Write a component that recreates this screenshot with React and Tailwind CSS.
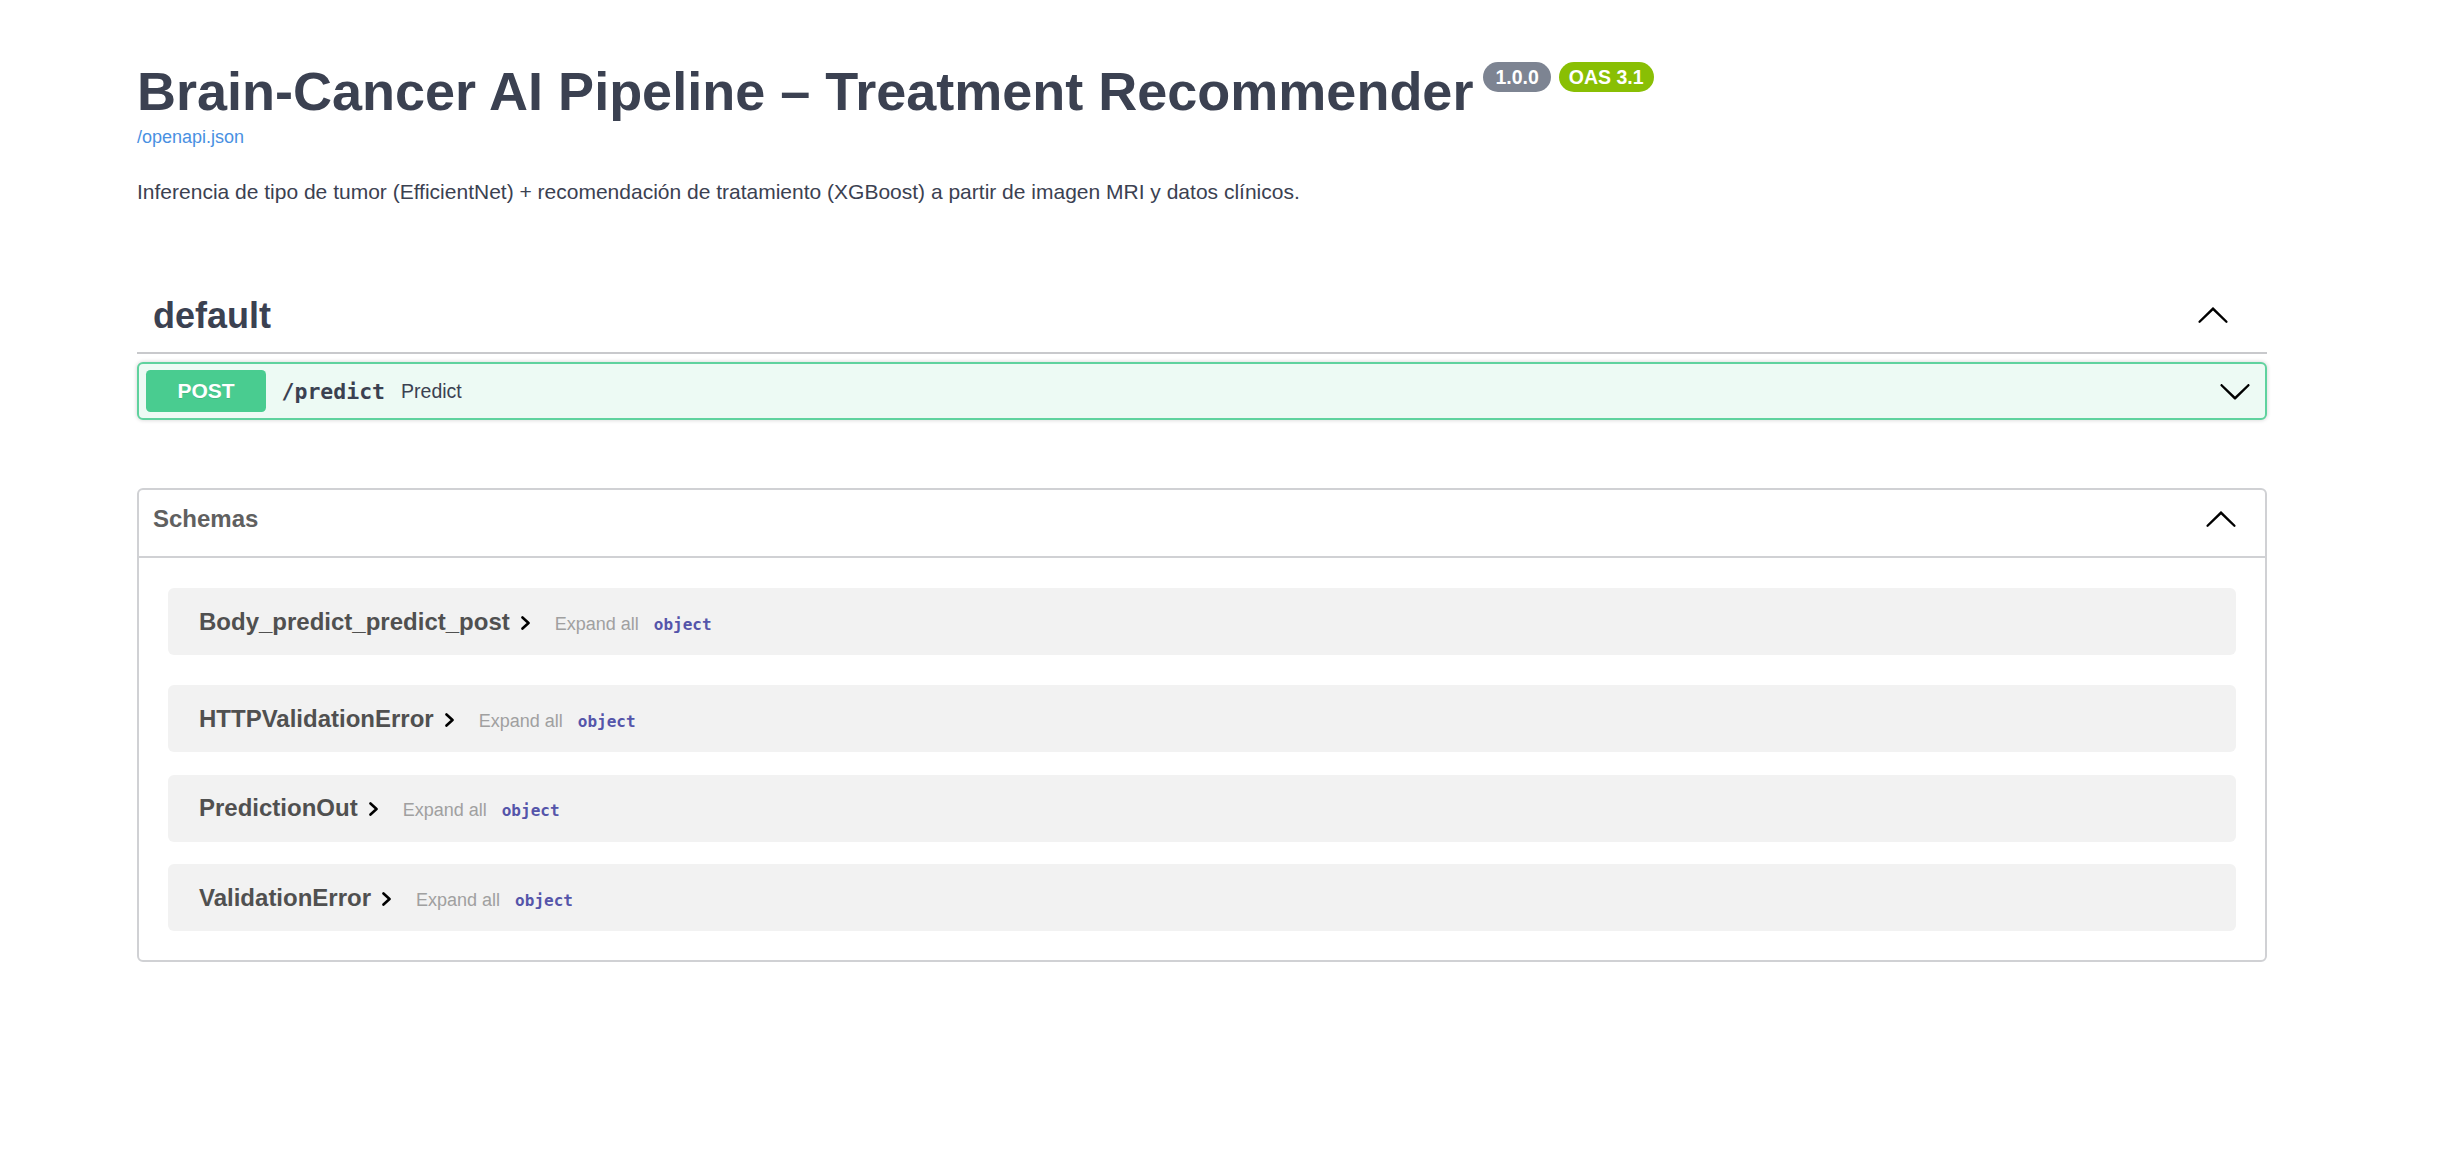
const sans = "font-['Liberation_Sans',Arial,sans-serif]";
const mono = "font-['DejaVu_Sans_Mono',monospace]";

function Arrow({ up = false, className = '' }) {
  return (
    <svg viewBox="0 0 20 20" fill="currentColor" className={`${className} ${up ? 'rotate-180' : ''}`}>
      <path d="M17.418 6.109c.272-.268.709-.268.979 0s.271.701 0 .969l-7.908 7.83c-.27.268-.707.268-.979 0l-7.908-7.83c-.27-.268-.27-.701 0-.969.271-.268.709-.268.979 0L10 13.25l7.418-7.141z" />
    </svg>
  );
}

function SmallArrow() {
  return (
    <svg viewBox="0 0 11 14" className="ml-[10px] w-[11px] h-[14px] shrink-0">
      <path d="M2.5 1.5 L8.5 7 L2.5 12.5" fill="none" stroke="#000" strokeWidth="2.6" strokeLinecap="round" strokeLinejoin="round" />
    </svg>
  );
}

const schemas = [
  { name: 'Body_predict_predict_post', mt: 'mt-[30px]' },
  { name: 'HTTPValidationError', mt: 'mt-[30px]' },
  { name: 'PredictionOut', mt: 'mt-[22.5px]' },
  { name: 'ValidationError', mt: 'mt-[22.5px]' },
];

export default function App() {
  return (
    <div className={`min-h-screen bg-white text-[#3b4151] ${sans}`}>
      <div className="w-[2130px] ml-[137px] pt-[60px]">
        <div className="flex items-start">
          <h2 className="text-[54px] leading-[62px] font-bold">
            Brain-Cancer AI Pipeline – Treatment Recommender
          </h2>
          <span className="ml-[10px] mt-[2px] h-[30px] px-[12px] rounded-full bg-[#7d8492] text-white text-[19.5px] leading-[30px] font-bold">
            1.0.0
          </span>
          <span className="ml-[8px] mt-[2px] h-[30px] px-[10px] rounded-full bg-[#89bf04] text-white text-[19.5px] leading-[30px] font-bold">
            OAS 3.1
          </span>
        </div>
        <a className="block w-fit mt-[5px] text-[18px] leading-[21px] text-[#4990e2]">/openapi.json</a>
        <p className="mt-[32px] text-[21px] leading-[24px]">
          Inferencia de tipo de tumor (EfficientNet) + recomendación de tratamiento (XGBoost) a partir de imagen MRI y datos clínicos.
        </p>

        <div className="mt-[76px]">
          <div className="flex items-center justify-between pl-[16px] pr-[37px] pt-[15px] pb-[15px] border-b-2 border-[#c8c9cc]">
            <h3 className="text-[36px] leading-[42px] font-bold">default</h3>
            <Arrow up className="w-[34px] h-[34px] text-black" />
          </div>
          <div className="mt-[8px] flex items-center px-[7px] py-[6px] border-2 border-[#5fd29e] bg-[#edfaf4] rounded-[6px] shadow-[0_0_4.5px_rgba(0,0,0,0.19)]">
            <div className="w-[120px] h-[42px] rounded-[4.5px] bg-[#49cc90] flex items-center justify-center text-white text-[21px] leading-[24px] font-bold [text-shadow:0_1px_0_rgba(0,0,0,0.1)]">
              POST
            </div>
            <span className={`ml-[15.5px] ${mono} text-[21.5px] leading-[25px] font-bold`}>/predict</span>
            <span className="ml-[16px] text-[19.5px] leading-[22px]">Predict</span>
            <Arrow className="ml-auto mr-[6px] w-[34px] h-[34px] text-black" />
          </div>
        </div>

        <div className="mt-[68px] border-2 border-[#d0d1d4] rounded-[6px] pb-[29px]">
          <div className="flex items-start justify-between pl-[14px] pr-[27px] pt-[13px] pb-[19px] border-b-2 border-[#d0d1d4]">
            <h4 className="mt-[1.5px] text-[24px] leading-[28px] font-bold text-[#606060]">Schemas</h4>
            <Arrow up className="w-[34px] h-[34px] text-black" />
          </div>
          <div className="px-[29px]">
            {schemas.map((s) => (
              <div key={s.name} className={`${s.mt} h-[67px] flex items-center pl-[31px] bg-[#f2f2f2] rounded-[6px]`}>
                <div className="flex items-baseline">
                  <span className="text-[24px] leading-[28px] font-bold text-[#505050]">{s.name}</span>
                  <SmallArrow />
                  <span className="ml-[24px] text-[18px] leading-[21px] text-[#a0a0a0]">Expand all</span>
                  <span className={`ml-[15px] ${mono} text-[16px] leading-[20px] font-bold text-[#5555aa]`}>object</span>
                </div>
              </div>
            ))}
          </div>
        </div>
      </div>
    </div>
  );
}
